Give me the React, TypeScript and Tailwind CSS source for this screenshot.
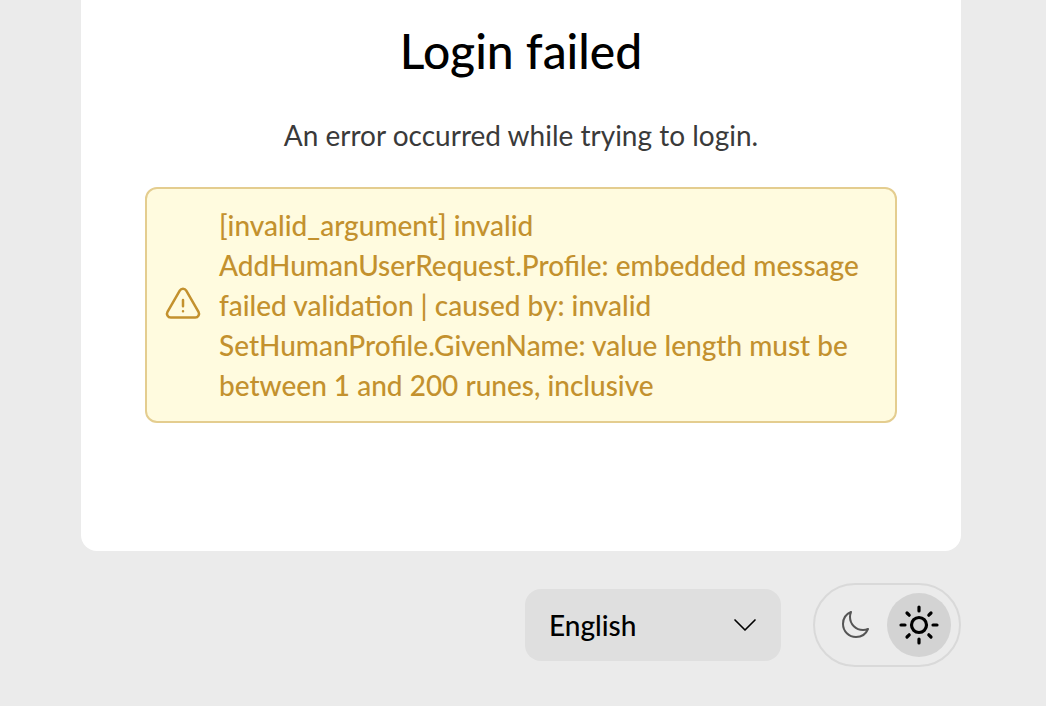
import { HiOutlineExclamationTriangle, HiOutlineMoon, HiOutlineChevronDown } from "react-icons/hi2";

function SunIcon() {
  return (
    <svg viewBox="0 0 20 20" className="size-10" fill="none" stroke="currentColor" strokeWidth="1.6" strokeLinecap="round" aria-hidden="true">
      <circle cx="10" cy="10" r="3.75" />
      <path d="M10 1v2M10 17v2M1 10h2M17 10h2M4 4l1.1 1.1M14.900 14.900L16 16M4 16l1.100-1.100M14.900 5.100L16 4" />
    </svg>
  );
}

export default function App() {
  return (
    <div className="min-h-screen bg-[#ebebeb] pr-[85px] pl-[81px] pb-10 font-['Lato',sans-serif] text-black">
      <main className="flex flex-col items-center rounded-b-2xl bg-white px-16 pt-[23px] pb-32">
        <h1 className="text-[48px] leading-14 font-medium">Login failed</h1>
        <p className="mt-9 text-[28px] leading-10 text-[#3a3a3a]">An error occurred while trying to login.</p>
        <div role="alert" className="mt-8 flex w-full items-center rounded-xl border-2 border-[#e4cd8f] bg-[#fffbdf] p-4 text-[28px] leading-10 font-medium text-[#c3912e]">
          <HiOutlineExclamationTriangle className="mr-4 size-10 shrink-0" aria-hidden="true" />
          <span>[invalid_argument] invalid AddHumanUserRequest.Profile: embedded message failed validation | caused by: invalid SetHumanProfile.GivenName: value length must be between 1 and 200 runes, inclusive</span>
        </div>
      </main>
      <footer className="flex items-center justify-end gap-8 pt-8">
        <div className="grid h-[72px] w-64 items-center rounded-2xl bg-[#dfdfdf] text-[28px] leading-10">
          <select aria-label="Language" defaultValue="en" className="col-start-1 row-start-1 h-full w-full appearance-none rounded-2xl bg-transparent pr-14 pl-6 font-medium">
            <option value="en">English</option>
          </select>
          <HiOutlineChevronDown strokeWidth={1.25} className="pointer-events-none col-start-1 row-start-1 mr-5 size-8 justify-self-end" aria-hidden="true" />
        </div>
        <div className="flex h-[84px] items-center rounded-full border-2 border-[#d9d9d9] px-2">
          <button type="button" aria-label="Dark theme" className="flex size-16 items-center justify-center rounded-full text-[#555555]">
            <HiOutlineMoon className="size-8" />
          </button>
          <button type="button" aria-label="Light theme" className="flex size-16 items-center justify-center rounded-full bg-[#d3d3d3]">
            <SunIcon />
          </button>
        </div>
      </footer>
    </div>
  );
}
